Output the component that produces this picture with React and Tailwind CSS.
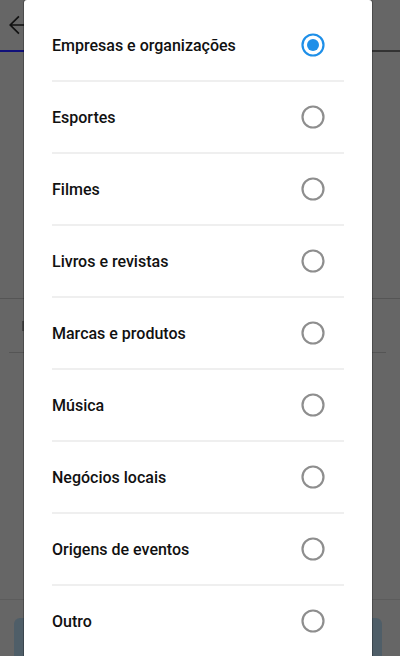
import React, { useState } from 'react';

const options = [
  'Empresas e organizações',
  'Esportes',
  'Filmes',
  'Livros e revistas',
  'Marcas e produtos',
  'Música',
  'Negócios locais',
  'Origens de eventos',
  'Outro',
];

function Radio({ checked }) {
  return (
    <svg width="24" height="24" viewBox="0 0 24 24" className="shrink-0">
      <circle
        cx="12"
        cy="12"
        r="10.5"
        fill="none"
        stroke={checked ? '#1e8fe8' : '#8e8e8e'}
        strokeWidth="2.2"
      />
      {checked && <circle cx="12" cy="12" r="6" fill="#1e8fe8" />}
    </svg>
  );
}

export default function App() {
  const [selected, setSelected] = useState(0);

  return (
    <div className="relative w-[400px] h-[656px] overflow-hidden bg-[#666666] font-['Roboto',sans-serif]">
      {/* dimmed page behind the dialog */}
      <div className="flex flex-col h-full">
        <div className="h-[50px] flex items-center pl-[7px]">
          <svg width="26" height="26" viewBox="0 0 24 24" fill="none" stroke="#111" strokeWidth="1.6">
            <path d="M22 12H3M11 4l-8 8 8 8" />
          </svg>
        </div>
        <div className="flex h-[2px]">
          <div className="w-[30px] bg-[#10107a]" />
          <div className="flex-1 bg-[#333333]" />
        </div>
        <div className="h-[246px]" />
        <div className="h-px bg-[#555555]" />
        <div className="h-[22px]" />
        <div className="h-[10px] w-[24px] flex justify-end">
          <div className="w-[2px] bg-[#444444]" />
        </div>
        <div className="h-[21px]" />
        <div className="h-px ml-[9px] mr-[14px] bg-[#555555]" />
        <div className="h-[246px]" />
        <div className="h-px bg-[#5c5c5c]" />
        <div className="h-[18px]" />
        <div className="flex-1 ml-[14px] mr-[18px] rounded-t-[6px] bg-[#4f5e68]" />
      </div>

      {/* dialog */}
      <div className="absolute left-[24px] top-0 w-[348px] h-[680px] bg-white rounded-[3px] shadow-[0_0_0_1px_rgba(0,0,0,0.25)] pt-[10px]">
        {options.map((label, i) => (
          <button
            key={label}
            onClick={() => setSelected(i)}
            className="block w-full text-left px-[28px]"
          >
            <div className="h-[70px] flex items-center justify-between pt-[2px]">
              <span className="text-[16px] font-medium text-[#111111]">{label}</span>
              <span className="mr-[19px] -mt-[2px]">
                <Radio checked={selected === i} />
              </span>
            </div>
            <div className="h-[2px] bg-[#efefef]" />
          </button>
        ))}
      </div>
    </div>
  );
}
